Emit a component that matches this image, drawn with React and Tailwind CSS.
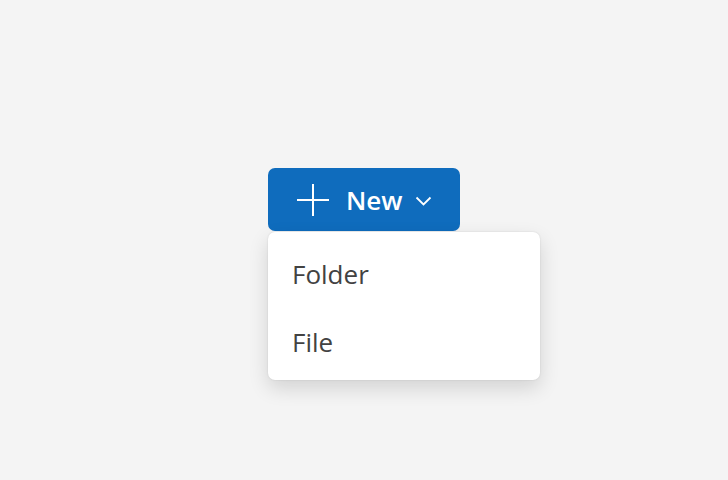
export default function App() {
  return (
    <div
      className="w-[728px] h-[480px] bg-[#f4f4f4] flex justify-center pt-[168px]"
      style={{ fontFamily: '"Open Sans", "Noto Sans", sans-serif' }}
    >
      <div className="relative h-fit">
        <button className="w-[192px] h-[63px] bg-[#0f6cbd] rounded-[7px] flex items-center pl-[28px] text-white">
          <svg width="34" height="34" viewBox="0 0 34 34" fill="none" stroke="white" strokeWidth="2">
            <path d="M17 1v32M1 17h32" />
          </svg>
          <span className="ml-[16px] text-[26px] font-semibold leading-none">New</span>
          <svg className="ml-[12px] mt-[3px]" width="17" height="10" viewBox="0 0 17 10" fill="none" stroke="white" strokeWidth="1.8">
            <path d="M1.5 1.5l7 7 7-7" />
          </svg>
        </button>
        <div className="absolute left-0 top-[64px] w-[272px] bg-white rounded-[7px] shadow-[0_8px_20px_rgba(0,0,0,0.14),0_0_2px_rgba(0,0,0,0.12)] py-[6px]">
          <div className="h-[68px] flex items-center pl-[24px] pt-[4px] text-[26px] text-[#424242]">Folder</div>
          <div className="h-[68px] flex items-center pl-[24px] pt-[4px] text-[26px] text-[#424242]">File</div>
        </div>
      </div>
    </div>
  );
}
